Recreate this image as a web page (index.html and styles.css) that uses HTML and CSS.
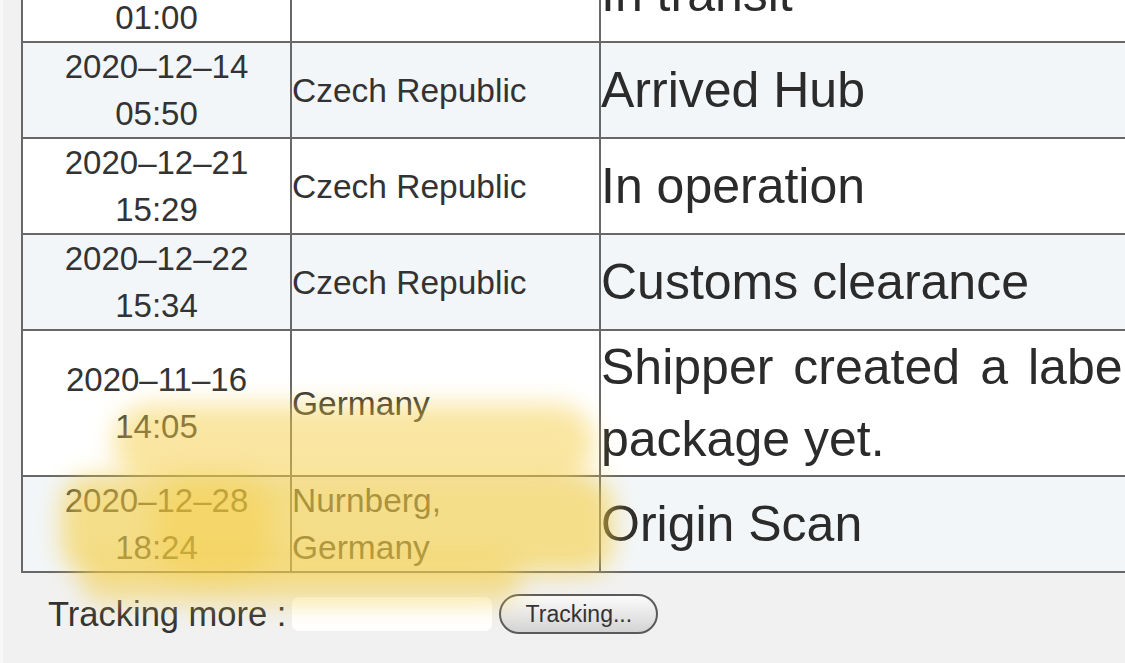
FILE: index.html
```html
<!DOCTYPE html>
<html lang="en">
<head>
<meta charset="utf-8">
<title>Tracking</title>
<link rel="stylesheet" href="styles.css">
</head>
<body>
<div class="page">
  <table class="track">
    <colgroup>
      <col class="c-time">
      <col class="c-place">
      <col class="c-status">
    </colgroup>
    <tbody>
      <tr>
        <td class="time">2020–12–13<br>01:00</td>
        <td class="place"></td>
        <td class="status">In transit</td>
      </tr>
      <tr>
        <td class="time">2020–12–14<br>05:50</td>
        <td class="place">Czech Republic</td>
        <td class="status">Arrived Hub</td>
      </tr>
      <tr>
        <td class="time">2020–12–21<br>15:29</td>
        <td class="place">Czech Republic</td>
        <td class="status">In operation</td>
      </tr>
      <tr>
        <td class="time">2020–12–22<br>15:34</td>
        <td class="place">Czech Republic</td>
        <td class="status">Customs clearance</td>
      </tr>
      <tr>
        <td class="time">2020–11–16<br>14:05</td>
        <td class="place">Germany</td>
        <td class="status">Shipper created a label, UPS has not received the package yet.</td>
      </tr>
      <tr>
        <td class="time">2020–12–28<br>18:24</td>
        <td class="place">Nurnberg,<br>Germany</td>
        <td class="status">Origin Scan</td>
      </tr>
    </tbody>
  </table>

  <div class="more">
    <span class="more-label">Tracking more :</span>
    <span class="more-input"></span>
    <button class="more-btn" type="button">Tracking...</button>
  </div>

  <div class="marker" aria-hidden="true">
    <span class="hl hl-top"></span>
    <span class="hl hl-low"></span>
    <span class="hl hl-tail"></span>
    <span class="hl hl-dense"></span>
  </div>
</div>
</body>
</html>
```

FILE: styles.css
```css
html, body {
  margin: 0;
  padding: 0;
  height: 100%;
  overflow: hidden;
  background: #f1f1f1;
}

body {
  font-family: "Liberation Sans", Arial, sans-serif;
  color: #333;
}

.page {
  display: flow-root;
  position: relative;
  height: 100%;
  border-left: 3px solid #f8f8f8;
  padding-left: 18px;
  box-sizing: border-box;
}

.track {
  border-collapse: collapse;
  table-layout: fixed;
  width: 1738px;
  margin-top: -55px;
}

.c-time { width: 269px; }
.c-place { width: 309px; }
.c-status { width: 1160px; }

.track td {
  padding: 0;
  border: 2px solid #686868;
  vertical-align: middle;
}

.track tr:nth-child(odd) td { background: #ffffff; }
.track tr:nth-child(even) td { background: #f3f6f8; }

.time {
  text-align: center;
  font-size: 33px;
  line-height: 47px;
  color: #333;
}

.place {
  text-align: left;
  font-size: 33.5px;
  line-height: 47px;
  color: #333;
}

.status {
  text-align: justify;
  font-size: 50px;
  line-height: 72px;
  color: #2b2b2b;
}

.more {
  display: flex;
  align-items: center;
  padding-left: 27px;
  margin-top: 21px;
}

.more-label {
  font-size: 34.5px;
  line-height: 40px;
  color: #333;
}

.more-input {
  display: block;
  width: 200px;
  height: 34px;
  margin-left: 6px;
  background: #ffffff;
  border-radius: 7px;
}

.more-btn {
  margin-left: 7px;
  width: 159px;
  height: 40px;
  border: 2px solid #5a5a5a;
  border-radius: 20px;
  background: linear-gradient(#fbfbfb, #e6e6e6 55%, #d3d3d3);
  font-family: "Liberation Sans", Arial, sans-serif;
  font-size: 23px;
  color: #333;
  padding: 0;
}

.marker {
  position: absolute;
  inset: 0;
  pointer-events: none;
}

.hl {
  position: absolute;
  display: block;
  background: rgba(245, 206, 70, 0.5);
  border-radius: 40px;
  filter: blur(12px);
}

.hl-top {
  left: 110px;
  top: 404px;
  width: 482px;
  height: 78px;
}

.hl-low {
  left: 58px;
  top: 476px;
  width: 552px;
  height: 98px;
  border-radius: 30px;
  background: rgba(245, 206, 70, 0.62);
}

.hl-tail {
  left: 78px;
  top: 558px;
  width: 440px;
  height: 46px;
  background: rgba(245, 206, 70, 0.5);
}

.hl-dense {
  left: 150px;
  top: 476px;
  width: 120px;
  height: 100px;
  background: rgba(243, 200, 50, 0.35);
  filter: blur(14px);
}
```
